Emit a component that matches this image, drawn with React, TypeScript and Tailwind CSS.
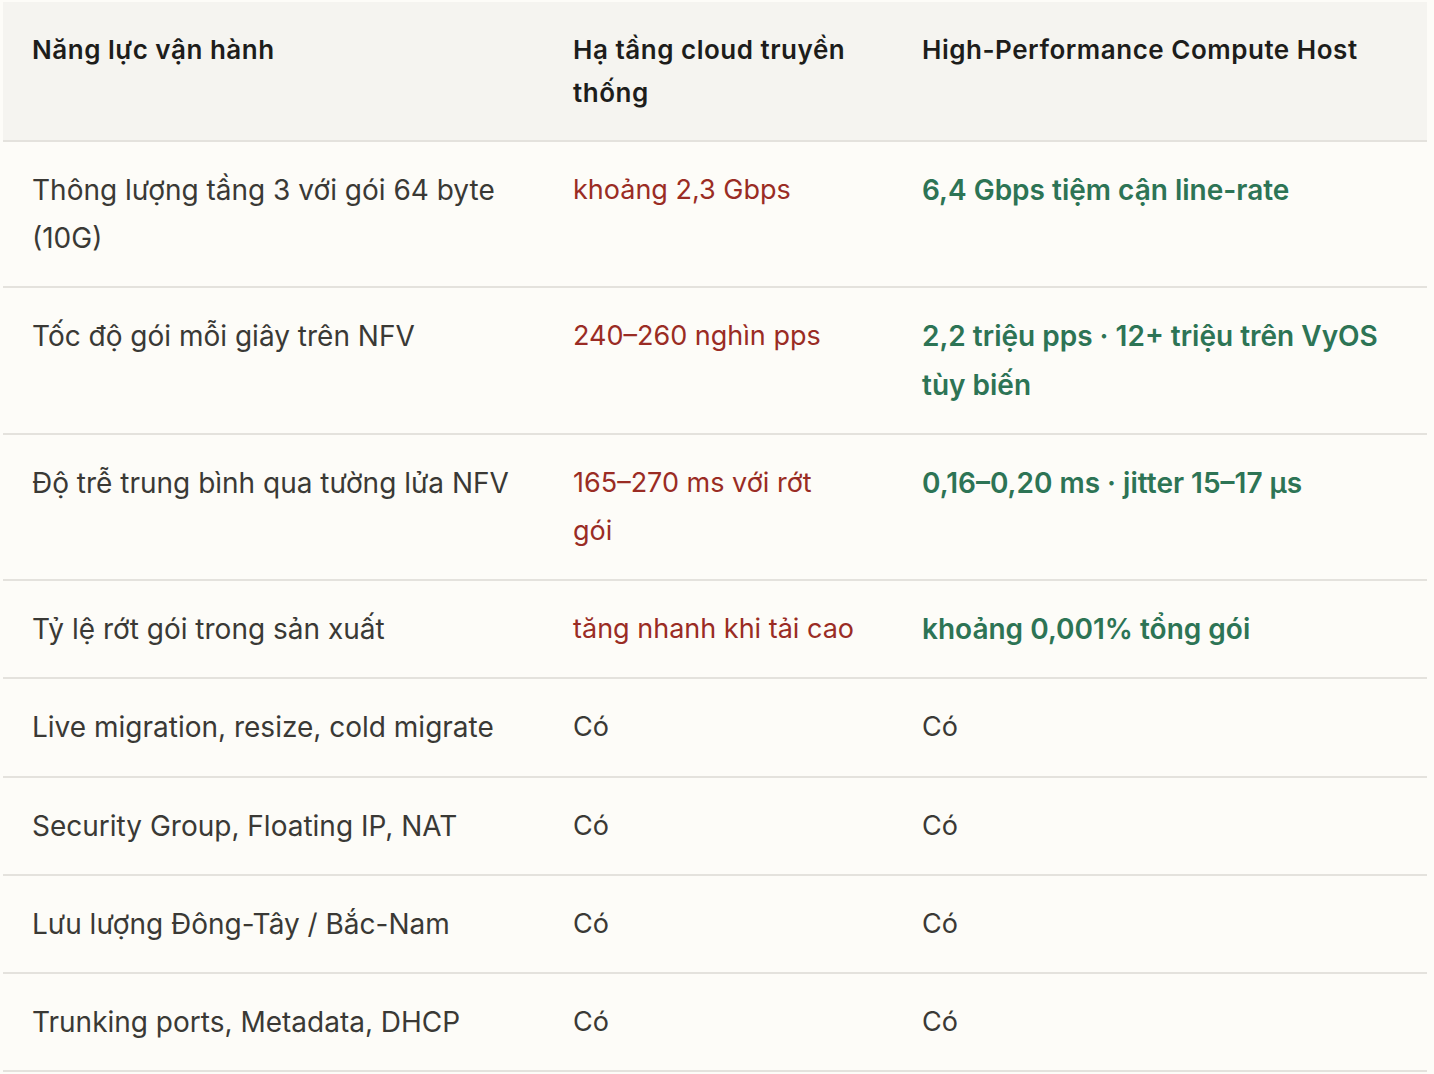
import React from "react";

type Cell = { text: string; tone?: "bad" | "good" };

const rows: [string, Cell, Cell][] = [
  ["Thông lượng tầng 3 với gói 64 byte (10G)", { text: "khoảng 2,3 Gbps", tone: "bad" }, { text: "6,4 Gbps tiệm cận line-rate", tone: "good" }],
  ["Tốc độ gói mỗi giây trên NFV", { text: "240–260 nghìn pps", tone: "bad" }, { text: "2,2 triệu pps · 12+ triệu trên VyOS tùy biến", tone: "good" }],
  ["Độ trễ trung bình qua tường lửa NFV", { text: "165–270 ms với rớt gói", tone: "bad" }, { text: "0,16–0,20 ms · jitter 15–17 µs", tone: "good" }],
  ["Tỷ lệ rớt gói trong sản xuất", { text: "tăng nhanh khi tải cao", tone: "bad" }, { text: "khoảng 0,001% tổng gói", tone: "good" }],
  ["Live migration, resize, cold migrate", { text: "Có" }, { text: "Có" }],
  ["Security Group, Floating IP, NAT", { text: "Có" }, { text: "Có" }],
  ["Lưu lượng Đông-Tây / Bắc-Nam", { text: "Có" }, { text: "Có" }],
  ["Trunking ports, Metadata, DHCP", { text: "Có" }, { text: "Có" }],
];

const toneClass = (tone?: "bad" | "good") =>
  tone === "bad"
    ? "text-[27px] text-[#9a2c24]"
    : tone === "good"
      ? "text-[28px] font-semibold text-[#2d7455]"
      : "text-[27px] text-[#3a3935]";

export default function App() {
  return (
    <div className="min-h-[1074px] bg-[#fdfcf8] pl-[3px] pt-[2px] font-['Inter','Liberation_Sans',sans-serif]">
      <div className="w-[1424px]">
        <div className="grid grid-cols-[541px_349px_534px] border-b-2 border-[#e4e2dd] bg-[#f5f4f0] text-[26px] font-semibold leading-[43px] tracking-[0.02em] text-[#1d1d1b]">
          <div className="py-[26px] pl-[29px] pr-3">Năng lực vận hành</div>
          <div className="py-[26px] pl-[29px] pr-6">Hạ tầng cloud truyền thống</div>
          <div className="py-[26px] pl-[29px] pr-6">High-Performance Compute Host</div>
        </div>
        {rows.map(([label, a, b]) => (
          <div
            key={label}
            className="grid grid-cols-[541px_349px_534px] border-b-2 border-[#e4e2dd] leading-[48.2px]"
          >
            <div className="py-6 pl-[29px] pr-3 text-[28px] text-[#3a3935]">{label}</div>
            <div className={"py-6 pl-[29px] pr-[35px] " + toneClass(a.tone)}>{a.text}</div>
            <div className={"py-6 pl-[29px] pr-6 " + toneClass(b.tone)}>{b.text}</div>
          </div>
        ))}
      </div>
    </div>
  );
}
